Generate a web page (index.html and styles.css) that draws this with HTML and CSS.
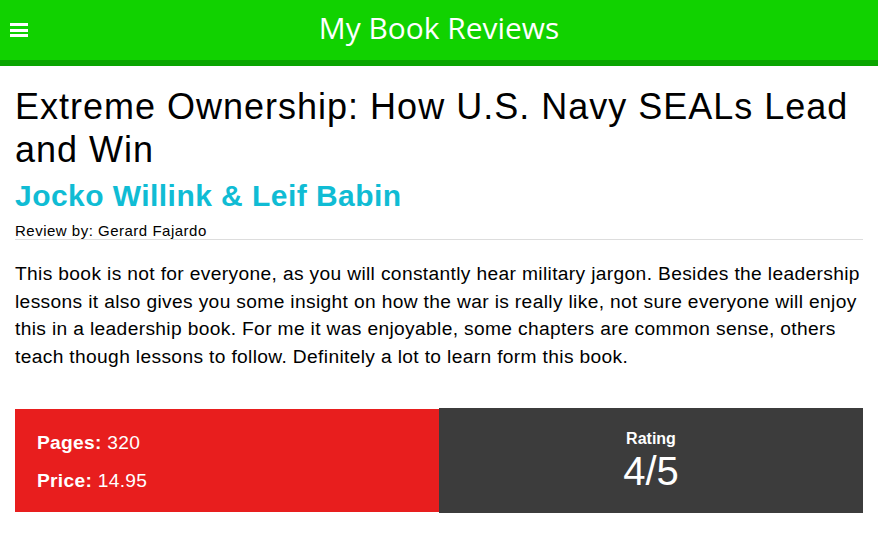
FILE: index.html
```html
<!DOCTYPE html>
<html>
<head>
<meta charset="utf-8">
<link rel="stylesheet" href="styles.css">
</head>
<body>
<header class="topbar">
  <span class="menu"><span></span><span></span><span></span></span>
  <h1 class="brand">My Book Reviews</h1>
</header>
<main class="content">
  <h2 class="title">Extreme Ownership: How U.S. Navy SEALs Lead and Win</h2>
  <h3 class="author">Jocko Willink &amp; Leif Babin</h3>
  <div class="reviewer">Review by: Gerard Fajardo</div>
  <p class="review">This book is not for everyone, as you will constantly hear military jargon. Besides the leadership lessons it also gives you some insight on how the war is really like, not sure everyone will enjoy this in a leadership book. For me it was enjoyable, some chapters are common sense, others teach though lessons to follow. Definitely a lot to learn form this book.</p>
  <section class="stats">
    <div class="info">
      <div class="row"><b>Pages:</b> 320</div>
      <div class="row"><b>Price:</b> 14.95</div>
    </div>
    <div class="rating">
      <div class="label">Rating</div>
      <div class="score">4/5</div>
    </div>
  </section>
</main>
</body>
</html>
```

FILE: styles.css
```css
* { box-sizing: border-box; }
body {
  margin: 0;
  font-family: "Liberation Sans", Arial, sans-serif;
  color: #000;
  background: #fff;
}
.topbar {
  height: 66px;
  background: #11d200;
  border-bottom: 6px solid #0aa500;
  display: flex;
  align-items: flex-start;
  justify-content: center;
  position: relative;
}
.menu {
  position: absolute;
  left: 10px;
  top: 23px;
  width: 18px;
  height: 14px;
  display: flex;
  flex-direction: column;
  justify-content: space-between;
}
.menu span {
  display: block;
  height: 3px;
  background: #fff;
}
.brand {
  margin: 0;
  font-family: "Open Sans", "Noto Sans", sans-serif;
  font-weight: 400;
  font-size: 29.9px;
  color: #fff;
  line-height: 55px;
}
.content {
  padding: 0 15px;
}
.title {
  margin: 19px 0 0;
  font-size: 36px;
  font-weight: 400;
  letter-spacing: 1px;
  line-height: 43px;
}
.author {
  margin: 8px 0 0;
  font-size: 30px;
  font-weight: 700;
  letter-spacing: 0.45px;
  color: #10bcd4;
  line-height: 34px;
}
.reviewer {
  margin-top: 9px;
  font-size: 15px;
  letter-spacing: 0.5px;
  line-height: 17px;
  border-bottom: 1px solid #ddd;
}
.review {
  margin: 20px 0 0;
  font-size: 19.2px;
  letter-spacing: 0.35px;
  line-height: 27.5px;
}
.stats {
  margin-top: 38px;
  display: grid;
  grid-template-columns: 1fr 1fr;
  align-items: center;
}
.info {
  background: #e81e1e;
  color: #fff;
  height: 103px;
  padding: 15px 22px 0;
  font-size: 19.2px;
  letter-spacing: 0.3px;
}
.row { line-height: 37.5px; }
.rating {
  background: #3c3c3c;
  color: #fff;
  height: 105px;
  text-align: center;
  padding-top: 20.5px;
}
.label {
  font-size: 16px;
  font-weight: 700;
  line-height: 20px;
}
.score {
  font-size: 40px;
  line-height: 44px;
}
```
